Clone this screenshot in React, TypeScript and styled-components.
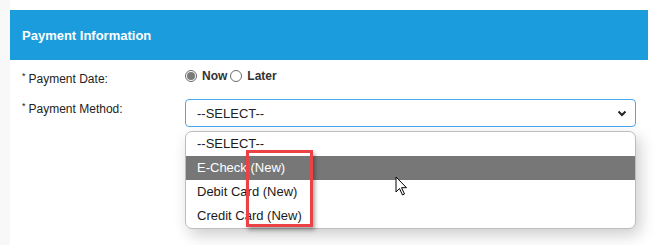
import styled, { createGlobalStyle } from "styled-components"

const GlobalStyle = createGlobalStyle`
  html, body {
    margin: 0;
    padding: 0;
    background: #fff;
    font-family: "Liberation Sans", Arial, sans-serif;
  }
`

const Page = styled.div`
  display: flex;
  width: 657px;
  height: 245px;
  overflow: hidden;
`

const Gutter = styled.div`
  width: 10px;
  flex-shrink: 0;
  background: #f8f8f8;
`

const Main = styled.div`
  flex: 1;
  padding-top: 10px;
  background: #fff;
`

const Panel = styled.div`
  position: relative;
  width: 638px;
  height: 100%;
  background: #fff;
`

const Header = styled.div`
  height: 50px;
  background: #1b9cdc;
  color: #fff;
  font-size: 13px;
  font-weight: bold;
  display: flex;
  align-items: center;
  padding: 1px 12px 0;
  box-sizing: border-box;
`

const Form = styled.div`
  display: flex;
  flex-direction: column;
  gap: 12px;
  padding: 8px 12px 0;
`

const Row = styled.div`
  display: grid;
  grid-template-columns: 163px 451px;
  align-items: start;
`

const Label = styled.div<{ $top: number }>`
  font-size: 12px;
  line-height: 16px;
  color: #222;
  padding-top: ${(p) => p.$top}px;
  > sup {
    font-size: 9px;
    line-height: 0;
    margin-right: 3px;
    vertical-align: 4px;
  }
`

const RadioGroup = styled.div`
  display: flex;
  align-items: center;
  height: 16px;
  font-size: 12px;
  font-weight: bold;
  color: #333;
`

const Radio = styled.span<{ $checked?: boolean }>`
  width: 12px;
  height: 12px;
  border-radius: 50%;
  border: 1px solid #6b6b6b;
  box-sizing: border-box;
  display: inline-flex;
  align-items: center;
  justify-content: center;
  margin: 0 5px 0 ${(p) => (p.$checked ? 0 : 3)}px;
  background: #fff;
  &::after {
    content: "";
    display: ${(p) => (p.$checked ? "block" : "none")};
    width: 8px;
    height: 8px;
    border-radius: 50%;
    background: #7a7a7a;
  }
`

const Select = styled.div`
  height: 28px;
  border: 1px solid #4aa8f0;
  border-radius: 4px;
  box-sizing: border-box;
  display: flex;
  align-items: center;
  justify-content: space-between;
  padding: 0 8px 0 11px;
  font-size: 13px;
  color: #222;
`

const Menu = styled.div`
  position: absolute;
  left: 175px;
  top: 121px;
  width: 451px;
  background: #fff;
  border: 1px solid #bdbdbd;
  border-radius: 7px;
  box-sizing: border-box;
  box-shadow: 4px 6px 16px rgba(0, 0, 0, 0.2);
  overflow: hidden;
`

const Option = styled.div<{ $active?: boolean }>`
  height: 24px;
  line-height: 24px;
  padding-left: 11px;
  font-size: 13px;
  color: ${(p) => (p.$active ? "#fff" : "#1a1a1a")};
  background: ${(p) => (p.$active ? "#777" : "transparent")};
`

const Highlight = styled.div`
  position: absolute;
  left: 236px;
  top: 140px;
  width: 67px;
  height: 77px;
  border: 3px solid #ec4245;
  box-sizing: border-box;
  box-shadow: 2px 3px 4px rgba(0, 0, 0, 0.35);
`

const Cursor = styled.svg`
  position: absolute;
  left: 385px;
  top: 166px;
`

const options = ["--SELECT--", "E-Check (New)", "Debit Card (New)", "Credit Card (New)"]

const App = () => {
  return (
    <>
      <GlobalStyle />
      <Page>
        <Gutter />
        <Main>
          <Panel>
            <Header>Payment Information</Header>
            <Form>
              <Row>
                <Label $top={3}>
                  <sup>*</sup>Payment Date:
                </Label>
                <RadioGroup>
                  <Radio $checked />
                  Now
                  <Radio />
                  Later
                </RadioGroup>
              </Row>
              <Row>
                <Label $top={2}>
                  <sup>*</sup>Payment Method:
                </Label>
                <Select>
                  --SELECT--
                  <svg width="10" height="7" viewBox="0 0 10 7">
                    <path d="M1.5 1.5 L5 5 L8.5 1.5" fill="none" stroke="#222" strokeWidth="2" />
                  </svg>
                </Select>
              </Row>
            </Form>
            <Menu>
              {options.map((o, i) => (
                <Option key={o} $active={i === 1}>
                  {o}
                </Option>
              ))}
            </Menu>
            <Highlight />
            <Cursor width="14" height="22" viewBox="0 0 14 22">
              <path
                d="M1 1 L1 16 L4.5 12.5 L7.5 19 L9.5 18 L6.5 11.7 L11.5 11.7 Z"
                fill="#fff"
                stroke="#000"
                strokeWidth="1"
                strokeLinejoin="round"
              />
            </Cursor>
          </Panel>
        </Main>
      </Page>
    </>
  )
}

export default App
